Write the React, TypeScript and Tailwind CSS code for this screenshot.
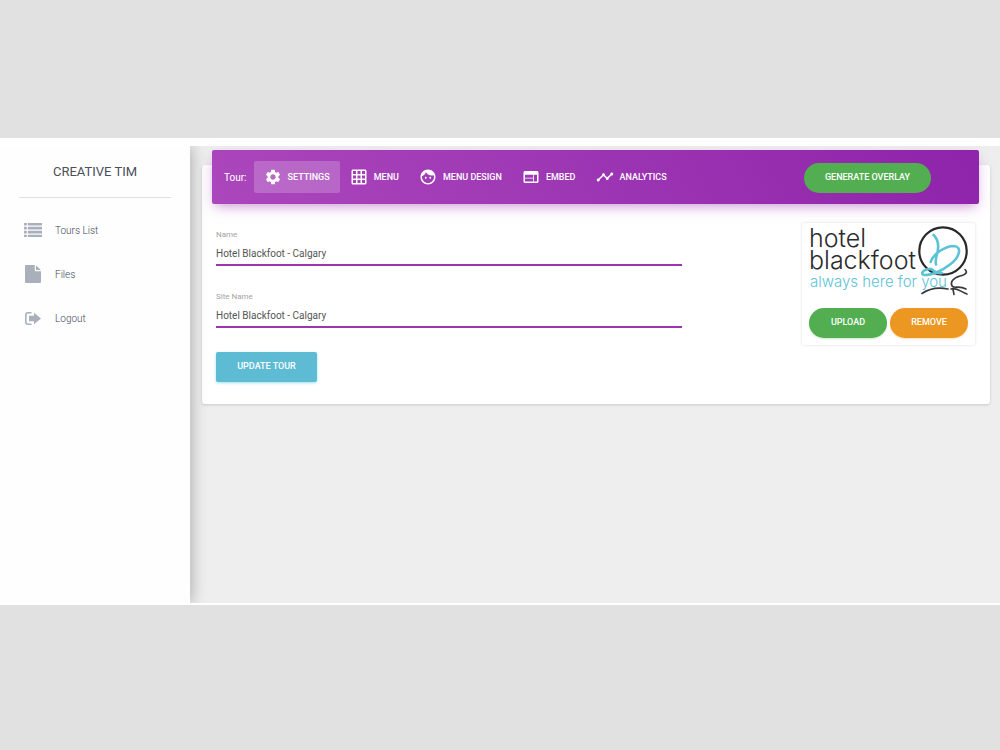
import React from "react";
import { MdFace, MdGridOn, MdSettings, MdTimeline, MdWeb } from "react-icons/md";

function ListIcon() {
  return (
    <svg viewBox="0 0 18 14" className="h-[14px] w-[18px]" fill="currentColor" aria-hidden="true">
      {[0, 4, 8, 12].map((y) => (
        <g key={y}>
          <rect x="0" y={y - 0.3} width="2.8" height="2.7" rx="0.3" />
          <rect x="3.8" y={y - 0.3} width="14.2" height="2.7" rx="0.3" />
        </g>
      ))}
    </svg>
  );
}

function FileIcon() {
  return (
    <svg viewBox="0 0 16 18" className="h-[18px] w-4" fill="currentColor" aria-hidden="true">
      <path d="M1 0h8.800v5.200a1 1 0 0 0 1 1H16V17a1 1 0 0 1-1 1H1a1 1 0 0 1-1-1V1a1 1 0 0 1 1-1z" />
      <path d="M11 .2L15.800 5H11z" />
    </svg>
  );
}

function LogoutIcon() {
  return (
    <svg viewBox="0 0 16 13" className="h-[13px] w-4" fill="currentColor" aria-hidden="true">
      <path d="M6.500 0v1.500H3.200A1.600 1.600 0 0 0 1.600 3.100v6.800a1.600 1.600 0 0 0 1.600 1.600h3.300V13H3a3 3 0 0 1-3-3V3a3 3 0 0 1 3-3z" />
      <path d="M9 .8l7 5.700-7 5.700V9.300H4V3.700h5z" />
    </svg>
  );
}

function HotelLogo() {
  return (
    <svg viewBox="0 0 160 74" className="h-[74px] w-[160px] overflow-visible" role="img" aria-label="hotel blackfoot always here for you">
      <g fontFamily="Inter, 'Liberation Sans', sans-serif" fontWeight="300">
        <text x="0" y="22" fontSize="25" fill="#2b2b2d">hotel</text>
        <text x="0" y="44" fontSize="25" fill="#2b2b2d">blackfoot</text>
        <text x="1" y="62" fontSize="15" fill="#5cc3d6">always here for you</text>
      </g>
      <g fill="none" strokeLinecap="round" strokeLinejoin="round">
        <circle cx="134" cy="26" r="23.700" stroke="#29292b" strokeWidth="2.200" />
        <path d="M124.500 10C129 14 130 20 128.500 27C127 33 126 36 127 39.500M121.700 37C124 29 136 21 145 21C154 22 150 33 141 39.500C133 46 122 50 116 50C111 50 113 45 120 44C126 43 123 49 133 48" stroke="#5cc3d6" strokeWidth="2.600" />
        <path d="M156 44.500C159 47 157 50 151 51C144 53 141 57 143 61C145 64 150 60 157 64M142 64C148 62 152 67 158 69M144 64.500L145 69.500M113 68.500C121 63 129 62 139 64" stroke="#39393c" strokeWidth="1.600" />
      </g>
    </svg>
  );
}

const sideLinks = [
  { label: "Tours List", Icon: ListIcon },
  { label: "Files", Icon: FileIcon },
  { label: "Logout", Icon: LogoutIcon },
];

const tabs = [
  { label: "SETTINGS", Icon: MdSettings, active: true },
  { label: "MENU", Icon: MdGridOn, active: false },
  { label: "MENU DESIGN", Icon: MdFace, active: false },
  { label: "EMBED", Icon: MdWeb, active: false },
  { label: "ANALYTICS", Icon: MdTimeline, active: false },
];

function Field({ id, label, value }: { id: string; label: string; value: string }) {
  return (
    <div className="flex flex-col">
      <label htmlFor={id} className="text-[8px] leading-[14px] text-[#a3a3a3]">{label}</label>
      <input
        id={id}
        type="text"
        defaultValue={value}
        className="h-6 w-full border-b-2 border-[#9c35ae] bg-transparent text-[10px] text-[#555] outline-none"
      />
    </div>
  );
}

export default function App() {
  return (
    <div className="min-h-screen bg-[#e1e1e1] py-[138px] font-['Roboto',sans-serif]">
      <div className="bg-white pt-2 pb-[2px]">
        <div className="flex min-h-[457px] bg-[#eee]">
          <aside className="relative z-10 w-[190px] shrink-0 bg-[#fefefe] pl-[19px] shadow-[2px_0_14px_rgba(0,0,0,0.26)] [clip-path:inset(0_-30px_0_0)]">
            <h1 className="mr-[19px] border-b border-[#e0e0e0] pt-4 pb-[15px] text-center text-[13px] leading-5 text-[#4a4f58]">
              CREATIVE TIM
            </h1>
            <nav className="flex flex-col pt-[10px]">
              {sideLinks.map(({ label, Icon }) => (
                <a key={label} href="#" className="flex h-11 items-center gap-3 pl-1 text-[10px] font-light text-[#3c4858]">
                  <span className="flex w-5 justify-center text-[#a9afbb]"><Icon /></span>
                  {label}
                </a>
              ))}
            </nav>
          </aside>
          <main className="min-w-0 flex-1 pt-[19px] pr-[10px] pl-3">
            <section className="flex flex-col rounded-[3px] bg-white pr-[11px] pb-[22px] pl-[10px] shadow-[0_1px_3px_rgba(0,0,0,0.16)]">
              <header className="relative -mt-[15px] flex h-[54px] items-center rounded-[2px] bg-linear-[60deg] from-[#ab47bc] to-[#8e24aa] pr-12 pl-3 text-white shadow-[0_5px_12px_-3px_rgba(156,39,176,0.5)]">
                <span className="mr-[7px] text-[10px]">Tour:</span>
                <nav className="flex">
                  {tabs.map(({ label, Icon, active }) => (
                    <a
                      key={label}
                      href="#"
                      aria-current={active ? "page" : undefined}
                      className={
                        active
                          ? "flex h-8 items-center gap-[6px] rounded-[2px] bg-white/20 px-[10px] text-[9px] font-medium whitespace-nowrap"
                          : "flex h-8 items-center gap-[6px] rounded-[2px] px-[10px] text-[9px] font-medium whitespace-nowrap"
                      }
                    >
                      <Icon className="size-[18px]" aria-hidden="true" />
                      <span className="pt-[2px]">{label}</span>
                    </a>
                  ))}
                </nav>
                <button className="mt-[2px] ml-auto h-[30px] w-[127px] rounded-full bg-[#52ae50] text-[9px] font-medium">
                  GENERATE OVERLAY
                </button>
              </header>
              <div className="flex items-start justify-between pt-[18px] pr-1 pl-1">
                <form className="flex w-[466px] flex-col items-start gap-6 pt-[6px]" onSubmit={(e) => e.preventDefault()}>
                  <div className="flex w-full flex-col gap-6">
                    <Field id="tour-name" label="Name" value="Hotel Blackfoot - Calgary" />
                    <Field id="site-name" label="Site Name" value="Hotel Blackfoot - Calgary" />
                  </div>
                  <button type="submit" className="h-[30px] w-[101px] rounded-[2px] bg-[#5dbbd3] text-[9px] font-medium text-white shadow-[0_1px_3px_rgba(0,188,212,0.4)]">
                    UPDATE TOUR
                  </button>
                </form>
                <div className="mt-px w-[173px] rounded-[2px] bg-white px-[7px] pt-[2px] pb-[7px] shadow-[0_0_3px_rgba(0,0,0,0.14)]">
                  <HotelLogo />
                  <div className="mt-[9px] flex gap-[3px]">
                    <button className="h-[30px] flex-1 rounded-full bg-[#52ae50] text-[9px] font-medium text-white shadow-[0_1px_2px_rgba(76,175,80,0.3)]">
                      UPLOAD
                    </button>
                    <button className="h-[30px] flex-1 rounded-full bg-[#ec9722] text-[9px] font-medium text-white shadow-[0_1px_2px_rgba(255,152,0,0.3)]">
                      REMOVE
                    </button>
                  </div>
                </div>
              </div>
            </section>
          </main>
        </div>
      </div>
    </div>
  );
}
